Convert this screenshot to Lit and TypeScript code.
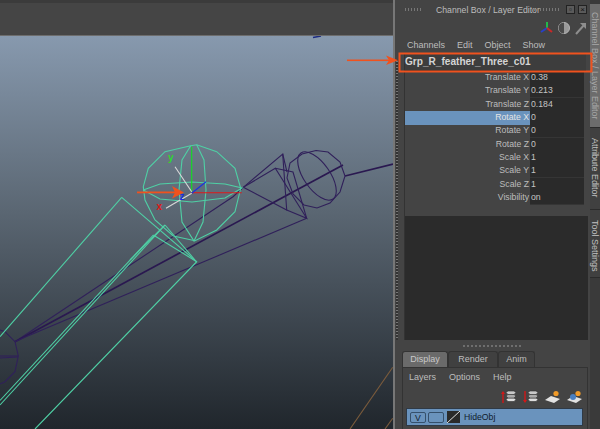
import { LitElement, html, css, svg } from 'lit';
import { customElement } from 'lit/decorators.js';

const CHANNELS = [
  ['Translate X', '0.38'],
  ['Translate Y', '0.213'],
  ['Translate Z', '0.184'],
  ['Rotate X', '0'],
  ['Rotate Y', '0'],
  ['Rotate Z', '0'],
  ['Scale X', '1'],
  ['Scale Y', '1'],
  ['Scale Z', '1'],
  ['Visibility', 'on'],
];

const poly = (pts: string, cls: string) => svg`<polyline class=${cls} points=${pts}></polyline>`;

@customElement('app-root')
export class AppRoot extends LitElement {
  static styles = css`
    :host {
      display: block;
      width: 600px;
      height: 429px;
      overflow: hidden;
      position: relative;
      font-family: "Liberation Sans", Arial, sans-serif;
      font-size: 8.7px;
      color: #bdbdbd;
      background: #444;
    }
    .root { display: flex; height: 429px; }

    .viewport { width: 393px; display: flex; flex-direction: column; }
    .band { height: 36px; background: #454545; border-top: 3px solid #3b3b3b; box-sizing: border-box; border-bottom: 1px solid #6d6d6d; flex: none; }
    .scene { display: block; width: 393px; height: 393px; background: linear-gradient(#8799ae, #5a6672 45%, #20262c); }
    .scene polyline, .scene line, .scene ellipse { fill: none; stroke-width: 1.1; }
    .g { stroke: #4fd0a5; }
    .p { stroke: #30205a; }
    .pb { stroke: #2a1850; stroke-width: 1.7 !important; }
    .b { stroke: #7c5c3c; }
    .dot { stroke: #1c2a80; stroke-width: 1.5 !important; }
    .scene text { font-size: 10px; font-weight: bold; }

    .panel { width: 197px; box-sizing: border-box; border-left: 2px solid #777; display: flex; flex-direction: column; background: #444; }
    .titlebar { height: 19px; display: flex; align-items: center; padding-left: 10px; }
    .grip { width: 18px; height: 3px; background: repeating-linear-gradient(90deg, #777 0 1px, transparent 1px 3px); }
    .grip.right { width: 26px; }
    .title { margin-left: 13px; width: 98px; white-space: nowrap; }
    .winbtn { width: 9px; height: 9px; border: 1px solid #222; background: #5a5a5a; margin-left: 3px; box-sizing: border-box; color: #111; font-size: 8px; line-height: 7px; text-align: center; }
    .winbtn.first { margin-left: 6px; }
    .tools { height: 17px; display: flex; justify-content: flex-end; align-items: center; padding-right: 1px; }
    .menu { height: 17px; display: flex; align-items: center; gap: 12px; padding-left: 12px; font-size: 9px; }

    .body { display: flex; height: 287px; }
    .gutter { width: 2px; margin: 8px 6px 0 1px; background: repeating-linear-gradient(#777 0 1px, #333 1px 3px); }
    .box { width: 184px; display: flex; flex-direction: column; background: #2b2b2b; border-left: 1px solid #333; box-sizing: border-box; }
    .channels { height: 163px; background: #444; padding-top: 1px; box-sizing: border-box; }
    .name { height: 17px; line-height: 16px; font-weight: bold; font-size: 10.1px; color: #d4d4d4; background: #3d3d3d; border-bottom: 1px solid #303030; box-sizing: border-box; margin-right: 2px; }
    .row { display: grid; grid-template-columns: 125px 54px; height: 13.33px; line-height: 13px; }
    .row .label { text-align: right; padding-right: 1px; }
    .row .value { background: #2a2a2a; padding-left: 1px; border-bottom: 1px solid #353535; box-sizing: border-box; color: #c4c4c4; }
    .row.sel .label { background: #6a93bd; color: #e4e4e4; }
    .sash { height: 11px; display: flex; justify-content: center; align-items: center; }
    .sash div { width: 60px; height: 2px; background: repeating-linear-gradient(90deg, #6e6e6e 0 2px, transparent 2px 4px); }

    .tabs { height: 16px; display: flex; padding-left: 7px; }
    .tab { box-sizing: border-box; text-align: center; line-height: 15px; border: 1px solid #333; border-bottom: none; border-radius: 3px 3px 0 0; background: #404040; font-size: 9px; }
    .tab.on { background: #6a6a6a; color: #c8c8c8; }
    .layers { flex: 1; margin: 0 2px 0 7px; border: 1px solid #333; border-bottom: none; display: flex; flex-direction: column; }
    .lmenu { height: 18px; display: flex; align-items: center; gap: 13px; padding-left: 6px; font-size: 9px; }
    .licons { height: 22px; display: flex; justify-content: flex-end; align-items: center; gap: 7px; padding-right: 5px; }
    .layer { height: 18px; margin: 0 4px 0 3px; background: #6a93bd; border: 1px solid #2f3a46; display: flex; align-items: center; gap: 2px; padding-left: 3px; box-sizing: border-box; color: #101c2c; font-size: 8.7px; }
    .lbtn { width: 16px; height: 11px; border: 1px solid #35506c; border-radius: 2px; text-align: center; line-height: 10px; box-sizing: border-box; }
    .swatch { width: 13px; height: 12px; background: #2a2a2a; margin: 0 2px 0 1px; flex: none; }

    .side { width: 10px; display: flex; flex-direction: column; background: #3a3a3a; padding-top: 4px; box-sizing: border-box; }
    .vtab { writing-mode: vertical-rl; box-sizing: border-box; font-size: 9px; line-height: 10px; white-space: nowrap; border-bottom: 1px solid #2b2b2b; background: #404040; color: #c0c0c0; }
    .vtab.on { background: #6c6c6c; height: 124px; color: #a8a8a8; padding-top: 8px; }
    .vtab.attr { height: 82px; padding-top: 10px; }
    .vtab.tool { height: 68px; padding-top: 10px; }

    .notes { position: absolute; left: 0; top: 0; width: 600px; height: 429px; pointer-events: none; }
  `;

  private scene() {
    return html`<svg class="scene" viewBox="0 36 393 393">
      ${poly('313,37.5 321,36', 'dot')}

      ${poly('0,330 5,331.7 15,341.7 18.3,356 15,371.7 5,381.7 0,384', 'p')}
      ${poly('0,356 18.3,356', 'p')}
      ${poly('0,358 18,357', 'p')}
      ${poly('15,341.7 233,196.7 243.3,187.3', 'p')}
      ${poly('15,341.7 343,165', 'pb')}
      ${poly('26,336.7 306.7,218.3', 'p')}
      ${poly('15,341.7 26,336.7', 'p')}
      ${poly('243.3,187.3 282.7,154 286.7,210 243.3,187.3', 'p')}
      ${poly('243.3,187.3 275.3,168.3 306.7,218.3 286.7,210', 'p')}
      ${poly('275.3,168.3 293,172 306.7,218.3', 'p')}
      ${poly('282.7,154 287,172', 'p')}
      ${poly('345,176 393,164', 'pb')}
      ${poly('316,150.5 328,152 340,162 345,176 340,192 330,203 317,208 304,205 293,194 287,178 290,163 302,154 316,150.5', 'p')}
      <ellipse class="p" cx="317" cy="176" rx="28" ry="13" transform="rotate(55 317 176)"></ellipse>

      ${poly('121.7,197.3 0,336.7', 'g')}
      ${poly('121.7,197.3 196.7,261.7 35,429', 'g')}
      ${poly('165,225 0,405', 'g')}
      ${poly('153.3,235 0,400.5', 'g')}
      ${poly('165,225 195,260', 'g')}
      ${poly('153.3,235 196.7,261.7', 'g')}
      ${poly('165,225 130,260', 'g')}

      ${poly('190.7,145.7 196.7,144.7 216.7,151.7 235,168.3 240.7,188.3 235,211.7 216.7,230 195,240.7 173.3,236 155,220 145,200 143.3,186.7 148.3,168.3 165,151.7 190.7,145.7', 'g')}
      ${poly('143.3,190 160,184 192,182 225,184 242,188 225,198 192,202 160,199 143.3,190', 'g')}
      ${poly('190.7,145.7 182,160 179,190 182,222 194,241 203,222 206,190 204,160 196.7,144.7', 'g')}

      <line x1="191.7" y1="146.7" x2="191.7" y2="191.7" stroke="#10dd20"></line>
      <line x1="191.7" y1="192.7" x2="241.7" y2="192.7" stroke="#e01818"></line>
      <line x1="191.7" y1="193.3" x2="206" y2="181.7" stroke="#1a30e0"></line>
      <line x1="175" y1="166.7" x2="191.7" y2="191.7" stroke="#d8d8d8"></line>
      <line x1="166" y1="208.3" x2="191.7" y2="193.3" stroke="#d8d8d8"></line>
      <text x="168" y="161" fill="#2fd82f">y</text>
      <text x="156.5" y="210" fill="#e01818">x</text>
      <text x="179.5" y="200" fill="#1a30e0">z</text>

      ${poly('392.7,367.3 350,429', 'b')}
      ${poly('392.7,418.3 385,429', 'b')}
    </svg>`;
  }

  private channelBoxTools() {
    return html`<svg width="50" height="16" viewBox="0 0 50 16">
      <line x1="8" y1="8" x2="8" y2="2" stroke="#22b84a" stroke-width="2"></line>
      <line x1="8" y1="8" x2="2" y2="12" stroke="#2840c8" stroke-width="2"></line>
      <line x1="8" y1="8" x2="13" y2="12" stroke="#c82828" stroke-width="2"></line>
      <circle cx="25" cy="8" r="5.5" fill="#9a9a9a" stroke="#b5b5b5"></circle>
      <path d="M25 2.5a5.5 5.5 0 0 0 0 11z" fill="#4a4a4a"></path>
      <line x1="37" y1="14" x2="46" y2="4" stroke="#8e8e8e" stroke-width="2"></line>
      <path d="M41 3h6v6z" fill="#8e8e8e"></path>
    </svg>`;
  }

  private stack(up: boolean) {
    return html`<svg width="15" height="14" viewBox="0 0 15 14">
      <line x1="2" y1=${up ? 13 : 1} x2="2" y2=${up ? 2 : 12} stroke="#d01818" stroke-width="1.4"></line>
      <path d=${up ? 'M0 4l2-3 2 3z' : 'M0 10l2 3 2-3z'} fill="#d01818"></path>
      <path d="M5 9.5l2-1.5h6l2 1.5-2 2h-6z" fill="#ddd" stroke="#333" stroke-width=".6"></path>
      <path d="M5 6l2-1.5h6l2 1.5-2 2h-6z" fill="#aaa" stroke="#333" stroke-width=".6"></path>
      <path d="M5 2.5l2-1.5h6l2 1.5-2 2h-6z" fill="#c8c8c8" stroke="#333" stroke-width=".6"></path>
    </svg>`;
  }

  private newLayer(ball: boolean) {
    return html`<svg width="15" height="14" viewBox="0 0 15 14">
      <path d="M0 10l6-4 9 3-6 4z" fill="#e2e2e2"></path>
      ${ball ? svg`<circle cx="6" cy="7" r="3" fill="#4a7fc0"></circle>` : ''}
      <circle cx="11" cy="3.5" r="2.6" fill="#f09a28"></circle>
    </svg>`;
  }

  render() {
    return html`
      <div class="root">
        <div class="viewport">
          <div class="band"></div>
          ${this.scene()}
        </div>

        <div class="panel">
          <div class="titlebar">
            <div class="grip"></div>
            <div class="title">Channel Box / Layer Editor</div>
            <div class="grip right"></div>
            <div class="winbtn first">▫</div>
            <div class="winbtn">×</div>
          </div>
          <div class="tools">${this.channelBoxTools()}</div>
          <div class="menu"><span>Channels</span><span>Edit</span><span>Object</span><span>Show</span></div>

          <div class="body">
            <div class="gutter"></div>
            <div class="box">
              <div class="channels">
                <div class="name">Grp_R_feather_Three_c01</div>
                ${CHANNELS.map(([label, value], i) => html`
                  <div class="row ${i === 3 ? 'sel' : ''}">
                    <div class="label">${label}</div>
                    <div class="value">${value}</div>
                  </div>`)}
              </div>
            </div>
          </div>

          <div class="sash"><div></div></div>
          <div class="tabs">
            <div class="tab on" style="width:46px">Display</div>
            <div class="tab" style="width:50px">Render</div>
            <div class="tab" style="width:37px">Anim</div>
          </div>
          <div class="layers">
            <div class="lmenu"><span>Layers</span><span>Options</span><span>Help</span></div>
            <div class="licons">${this.stack(true)}${this.stack(false)}${this.newLayer(false)}${this.newLayer(true)}</div>
            <div class="layer">
              <div class="lbtn">V</div>
              <div class="lbtn"></div>
              <svg class="swatch" viewBox="0 0 13 12"><line x1="0" y1="12" x2="13" y2="0" stroke="#ddd"></line></svg>
              <span>HideObj</span>
            </div>
          </div>
        </div>

        <div class="side">
          <div class="vtab on">Channel Box / Layer Editor</div>
          <div class="vtab attr">Attribute Editor</div>
          <div class="vtab tool">Tool Settings</div>
        </div>
      </div>

      <svg class="notes" viewBox="0 0 600 429">
        <rect x="399.5" y="53.5" width="192" height="18" fill="none" stroke="#f0521e" stroke-width="2"></rect>
        <rect x="347" y="59.5" width="42" height="1.6" fill="#f0521e"></rect>
        <path d="M386 55.5L398 60.3 386 65 389 60.3z" fill="#f0521e"></path>
        <rect x="137" y="191.5" width="38" height="1.8" fill="#f0521e"></rect>
        <path d="M172 186L184 192.4 172 198.5 175 192.4z" fill="#f0521e"></path>
      </svg>
    `;
  }
}
